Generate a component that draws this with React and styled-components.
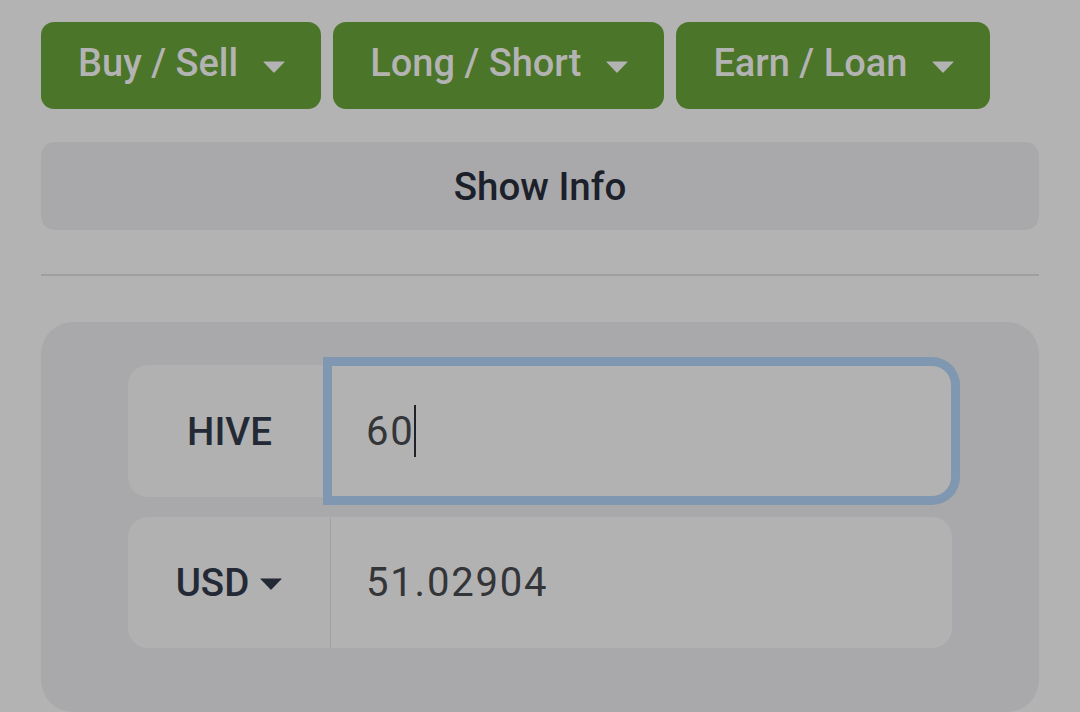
import React from "react";
import styled, { createGlobalStyle } from "styled-components";

const Global = createGlobalStyle`
  html, body { margin: 0; padding: 0; background: #b3b3b3; }
  body { font-family: Roboto, "Noto Sans", "Liberation Sans", sans-serif; }
  * { box-sizing: border-box; }
`;

const Page = styled.div`
  width: 1080px;
  height: 712px;
  overflow: hidden;
  padding: 22px 41px 0;
  display: flex;
  flex-direction: column;
`;

const Toolbar = styled.div`
  display: flex;
  gap: 12px;
`;

const MenuButton = styled.button`
  height: 87px;
  border: none;
  border-radius: 13px;
  background: #4b7528;
  color: #b3b3b3;
  font-family: Roboto, sans-serif;
  font-weight: 500;
  font-size: 38px;
  padding: 0 36px 5px 37px;
  display: flex;
  align-items: center;
  gap: 25px;
  cursor: pointer;
`;

const Caret = styled.svg`
  flex: none;
  margin-top: ${(p) => p.$offset || 0}px;
`;

const InfoButton = styled.button`
  margin-top: 33px;
  height: 88px;
  width: 100%;
  border: none;
  border-radius: 14px;
  background: #a9a9ab;
  color: #1b202a;
  font-family: Roboto, sans-serif;
  font-weight: 500;
  font-size: 38.5px;
  cursor: pointer;
`;

const Divider = styled.hr`
  margin: 44px 0 0;
  border: none;
  height: 2px;
  background: #9f9f9f;
`;

const Card = styled.div`
  margin-top: 46px;
  height: 390px;
  background: #a9a9ab;
  border-radius: 32px;
  padding: 43px 87px 0;
  display: flex;
  flex-direction: column;
  gap: 20px;
`;

const Group = styled.div`
  display: flex;
  height: ${(p) => p.$h}px;
  position: relative;
`;

const Label = styled.div`
  flex: none;
  width: 203px;
  background: #b1b1b2;
  border-radius: 20px 0 0 20px;
  border-right: ${(p) => (p.$divided ? "1px solid #a1a2a5" : "none")};
  display: flex;
  align-items: center;
  justify-content: center;
  gap: 11px;
  color: #232a35;
  font-family: Roboto, sans-serif;
  font-weight: 500;
  font-size: 38.5px;
`;

const Field = styled.div`
  flex: 1;
  background: #b2b2b2;
  border-radius: 0 20px 20px 0;
  display: flex;
  align-items: center;
  padding-left: 35px;
  color: #333538;
  font-family: Roboto, sans-serif;
  font-size: 40px;
  letter-spacing: 1.8px;
  position: relative;
  z-index: 1;
  ${(p) =>
    p.$focused &&
    `
    border: 1px solid #7f97b0;
    padding-left: 34px;
    box-shadow: 0 0 0 8px #7f97b0;
  `}
`;

const TextCaret = styled.span`
  display: inline-block;
  width: 2px;
  height: 52px;
  background: #1f2226;
  margin-left: -1px;
`;

const Tri = ({ color, offset }) => (
  <Caret $offset={offset} width="22" height="12" viewBox="0 0 22 12">
    <path d="M1 0.5 H21 Q22 0.5 21.3 1.3 L11.7 11.3 Q11 12 10.3 11.3 L0.7 1.3 Q0 0.5 1 0.5 Z" fill={color} />
  </Caret>
);

export default function App() {
  return (
    <>
      <Global />
      <Page>
        <Toolbar>
          {["Buy / Sell", "Long / Short", "Earn / Loan"].map((t) => (
            <MenuButton key={t}>
              <span>{t}</span>
              <Tri color="#b3b3b3" offset={8} />
            </MenuButton>
          ))}
        </Toolbar>
        <InfoButton>Show Info</InfoButton>
        <Divider />
        <Card>
          <Group $h={132}>
            <Label>HIVE</Label>
            <Field $focused>
              60<TextCaret />
            </Field>
          </Group>
          <Group $h={131}>
            <Label $divided>
              USD
              <Tri color="#232a35" offset={2} />
            </Label>
            <Field>51.02904</Field>
          </Group>
        </Card>
      </Page>
    </>
  );
}
